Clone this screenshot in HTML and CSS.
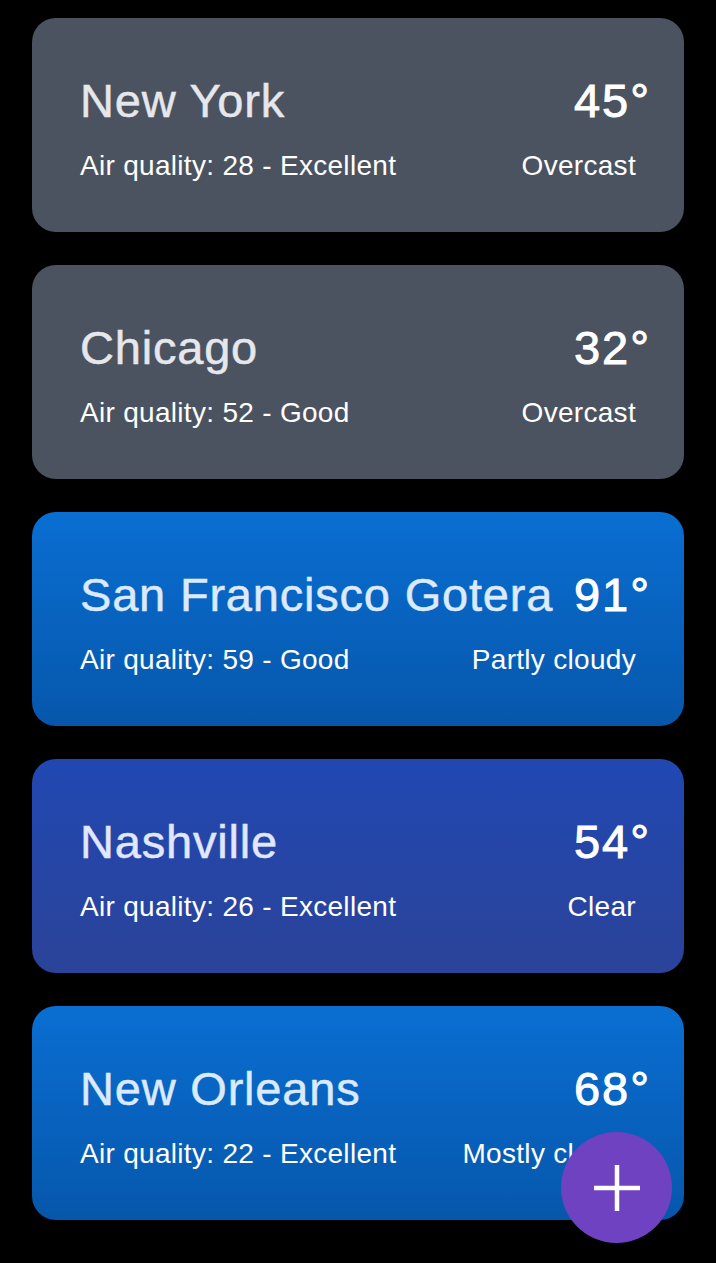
FILE: index.html
```html
<!DOCTYPE html>
<html>
<head>
<meta charset="utf-8">
<link rel="stylesheet" href="styles.css">
</head>
<body>
<main class="list">
  <section class="card card-gray">
    <div class="row-top"><span class="city">New York</span><span class="temp">45°</span></div>
    <div class="row-sub"><span>Air quality: 28 - Excellent</span><span>Overcast</span></div>
  </section>
  <section class="card card-gray">
    <div class="row-top"><span class="city">Chicago</span><span class="temp">32°</span></div>
    <div class="row-sub"><span>Air quality: 52 - Good</span><span>Overcast</span></div>
  </section>
  <section class="card card-blue">
    <div class="row-top"><span class="city">San Francisco Gotera</span><span class="temp">91°</span></div>
    <div class="row-sub"><span>Air quality: 59 - Good</span><span>Partly cloudy</span></div>
  </section>
  <section class="card card-indigo">
    <div class="row-top"><span class="city">Nashville</span><span class="temp">54°</span></div>
    <div class="row-sub"><span>Air quality: 26 - Excellent</span><span>Clear</span></div>
  </section>
  <section class="card card-blue">
    <div class="row-top"><span class="city">New Orleans</span><span class="temp">68°</span></div>
    <div class="row-sub"><span>Air quality: 22 - Excellent</span><span>Mostly cloudy</span></div>
  </section>
</main>
<button class="fab" aria-label="Add">
  <svg width="50" height="50" viewBox="0 0 50 50"><path d="M25 2 V48 M2 25 H48" stroke="#fff" stroke-width="4.5" fill="none"/></svg>
</button>
</body>
</html>
```
FILE: styles.css
```css
html, body {
  margin: 0;
  padding: 0;
  background: #000;
  height: 100%;
  overflow: hidden;
}
body {
  font-family: "Liberation Sans", Arial, sans-serif;
  color: #fff;
}
.list {
  display: flex;
  flex-direction: column;
  gap: 33px;
  padding: 18px 32px 0 32px;
}
.card {
  height: 214px;
  box-sizing: border-box;
  border-radius: 24px;
  padding: 59px 48px 0 48px;
  display: flex;
  flex-direction: column;
  gap: 28px;
}
.card-gray {
  background: #4b5360;
}
.card-gray .city { color: #e5e7eb; -webkit-text-stroke-color: #e5e7eb; }
.card-blue {
  background: linear-gradient(to bottom, #0a6ed2, #0657ab);
}
.card-blue .city { color: #dbeafe; -webkit-text-stroke-color: #dbeafe; }
.card-indigo {
  background: linear-gradient(to bottom, #2148b2, #2b4399);
}
.card-indigo .city { color: #e0e7ff; -webkit-text-stroke-color: #e0e7ff; }
.row-top {
  display: flex;
  justify-content: space-between;
  align-items: baseline;
  margin-right: -15px;
  font-size: 47px;
  line-height: 47px;
  white-space: nowrap;
}
.city {
  letter-spacing: 0.8px;
  -webkit-text-stroke-width: 0.5px;
}
.temp {
  color: #fff;
  letter-spacing: 2px;
  -webkit-text-stroke: 0.9px #fff;
}
.row-sub {
  display: flex;
  justify-content: space-between;
  font-size: 28px;
  line-height: 28px;
  letter-spacing: 0.3px;
  color: #fff;
  white-space: nowrap;
}
.fab {
  position: absolute;
  left: 561px;
  top: 1132px;
  width: 111px;
  height: 111px;
  border-radius: 50%;
  border: none;
  background: #6f42c1;
  padding: 0;
  display: flex;
  align-items: center;
  justify-content: center;
}
```
